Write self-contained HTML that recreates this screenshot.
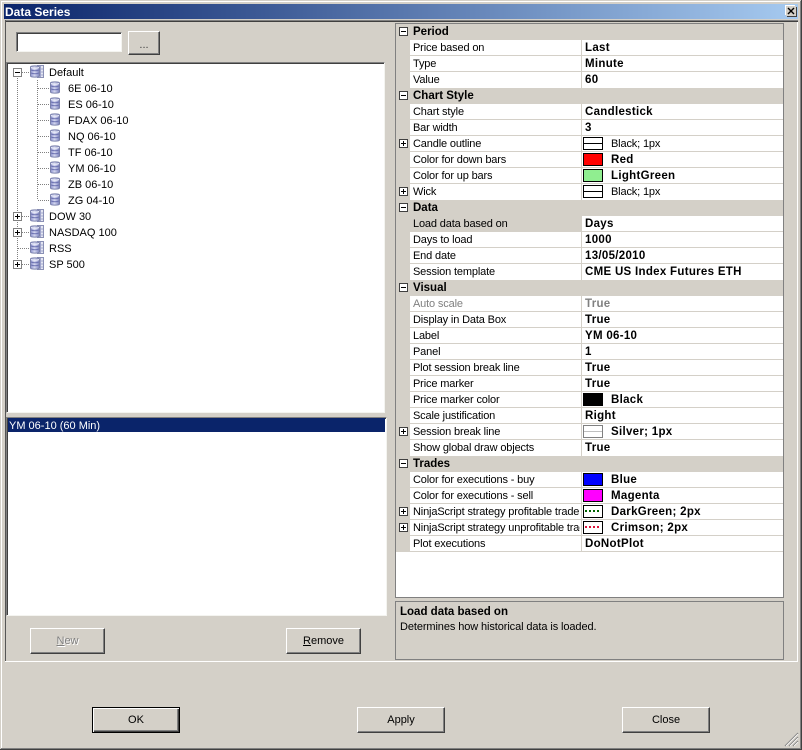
<!DOCTYPE html>
<html><head><meta charset="utf-8"><style>
html,body{margin:0;padding:0;background:#d4d0c8}
#w{position:relative;width:802px;height:750px;overflow:hidden;background:#d4d0c8;font:11px/16px "Liberation Sans",sans-serif;color:#000}
#w div,#w span.a{position:absolute;white-space:nowrap}
.btn{background:#d4d0c8;border:1px solid;border-color:#fff #404040 #404040 #fff;box-shadow:inset -1px -1px 0 #808080;text-align:center;box-sizing:border-box;line-height:25px;font-size:11px}
.sunk{background:#fff;border:1px solid;border-color:#808080 #f4f4f0 #f4f4f0 #808080;box-shadow:inset 1px 1px 0 #404040;box-sizing:border-box}
.t{font-size:11px;letter-spacing:0;margin-top:1px}
.n{left:413px;width:167px;overflow:hidden;font-size:11px;letter-spacing:-.15px;line-height:16px}
.v{left:585px;font-weight:bold;letter-spacing:.3px;font-size:11.5px;line-height:16px}
.h{left:413px;font-weight:bold;letter-spacing:0;font-size:11.5px;line-height:16px}
.ln{left:410px;width:373px;height:1px;background:#d4d0c8}
.sw{left:583px;width:20px;height:13px;border:1px solid #000;box-sizing:border-box}
.pb{left:399px;width:9px;height:9px;border:1px solid #404040;box-sizing:border-box;background:#fff}
.pb:before{content:"";position:absolute;left:1px;top:3px;width:5px;height:1px;background:#000}
.pb.p:after{content:"";position:absolute;left:3px;top:1px;width:1px;height:5px;background:#000}
.tb{left:13px;width:9px;height:9px;border:1px solid #808080;box-sizing:border-box;background:#fff}
.tb:before{content:"";position:absolute;left:1px;top:3px;width:5px;height:1px;background:#000}
.tb.p:after{content:"";position:absolute;left:3px;top:1px;width:1px;height:5px;background:#000}
.dh{height:1px;background:repeating-linear-gradient(90deg,#808080 0 1px,transparent 1px 2px)}
.dv{width:1px;background:repeating-linear-gradient(180deg,#808080 0 1px,transparent 1px 2px)}
svg{position:absolute;display:block}
</style></head><body><div id="w">
<!-- frame -->
<div style="left:0;top:0;width:802px;height:1px;background:#d4d0c8"></div>
<div style="left:1px;top:1px;width:800px;height:1px;background:#fff"></div>
<div style="left:1px;top:1px;width:1px;height:747px;background:#fff"></div>
<div style="left:801px;top:0;width:1px;height:750px;background:#404040"></div>
<div style="left:800px;top:1px;width:1px;height:748px;background:#808080"></div>
<div style="left:0;top:749px;width:802px;height:1px;background:#404040"></div>
<div style="left:1px;top:748px;width:800px;height:1px;background:#808080"></div>
<!-- title -->
<div style="left:4px;top:4px;width:794px;height:15px;background:linear-gradient(90deg,#0a246a,#a6caf0)"></div>
<div style="left:5px;top:4px;color:#fff;font-weight:bold;font-size:12px;line-height:17px">Data Series</div>
<div style="left:786px;top:6px;width:10px;height:10px;background:#d4d0c8;box-shadow:1px 1px 0 #404040,-1px -1px 0 #fff"></div>
<svg style="left:786px;top:6px" width="10" height="10"><path d="M2 2L8 8M8 2L2 8" stroke="#000" stroke-width="1.4"/></svg>
<!-- panel -->
<div style="left:5px;top:20px;width:793px;height:1px;background:#808080"></div>
<div style="left:5px;top:21px;width:793px;height:1px;background:#404040"></div>
<div style="left:5px;top:20px;width:1px;height:641px;background:#555"></div>
<div style="left:5px;top:661px;width:793px;height:1px;background:#fff"></div>
<div style="left:797px;top:22px;width:1px;height:640px;background:#fff"></div>
<!-- top input -->
<div class="sunk" style="left:16px;top:32px;width:106px;height:20px"></div>
<div class="btn" style="left:128px;top:31px;width:32px;height:24px;line-height:26px;color:#404040">...</div>
<!-- tree -->
<div class="sunk" style="left:6px;top:62px;width:379px;height:351px"></div>
<div class="dv" style="left:17px;top:76px;height:188px"></div>
<div class="dv" style="left:37px;top:80px;height:120px"></div>
<div class="dh" style="left:22px;top:72px;width:8px"></div>
<div class="dh" style="left:22px;top:216px;width:8px"></div>
<div class="dh" style="left:22px;top:232px;width:8px"></div>
<div class="dh" style="left:18px;top:248px;width:12px"></div>
<div class="dh" style="left:22px;top:264px;width:8px"></div>
<div class="dh" style="left:38px;top:88px;width:12px"></div>
<div class="dh" style="left:38px;top:104px;width:12px"></div>
<div class="dh" style="left:38px;top:120px;width:12px"></div>
<div class="dh" style="left:38px;top:136px;width:12px"></div>
<div class="dh" style="left:38px;top:152px;width:12px"></div>
<div class="dh" style="left:38px;top:168px;width:12px"></div>
<div class="dh" style="left:38px;top:184px;width:12px"></div>
<div class="dh" style="left:38px;top:200px;width:12px"></div>
<div class="tb" style="top:68px"></div>
<div class="tb p" style="top:212px"></div>
<div class="tb p" style="top:228px"></div>
<div class="tb p" style="top:260px"></div>
<svg width="0" height="0" style="left:0;top:0"><defs>
<linearGradient id="g" x1="0" x2="1" y1="0" y2="0"><stop offset="0" stop-color="#8a90cc"/><stop offset=".45" stop-color="#d6d9f0"/><stop offset="1" stop-color="#7a80bc"/></linearGradient>
<g id="c"><path d="M.5 2C.5 .5 9.5 .5 9.5 2V11C9.5 12.5 .5 12.5 .5 11Z" fill="url(#g)" stroke="#7a80aa"/><path d="M1 5C3 6 7 6 9 5M1 8C3 9 7 9 9 8" stroke="#7076b4" fill="none"/><path d="M1 2.5C3 3.5 7 3.5 9 2.5" stroke="#eef0fa" fill="none"/></g>
<g id="p"><rect x="7.5" y=".5" width="6" height="12" fill="#e4e6f2" stroke="#8a90b5"/><path d="M8 4H13M8 7H13M8 10H13M10.5 1V12" stroke="#a0a5cc"/><use href="#c" x="0" y="0"/></g>
</defs></svg>
<svg style="left:50px;top:81px" width="10" height="14"><use href="#c"/></svg>
<svg style="left:50px;top:97px" width="10" height="14"><use href="#c"/></svg>
<svg style="left:50px;top:113px" width="10" height="14"><use href="#c"/></svg>
<svg style="left:50px;top:129px" width="10" height="14"><use href="#c"/></svg>
<svg style="left:50px;top:145px" width="10" height="14"><use href="#c"/></svg>
<svg style="left:50px;top:161px" width="10" height="14"><use href="#c"/></svg>
<svg style="left:50px;top:177px" width="10" height="14"><use href="#c"/></svg>
<svg style="left:50px;top:193px" width="10" height="14"><use href="#c"/></svg>
<svg style="left:30px;top:65px" width="14" height="14"><use href="#p"/></svg>
<svg style="left:30px;top:209px" width="14" height="14"><use href="#p"/></svg>
<svg style="left:30px;top:225px" width="14" height="14"><use href="#p"/></svg>
<svg style="left:30px;top:241px" width="14" height="14"><use href="#p"/></svg>
<svg style="left:30px;top:257px" width="14" height="14"><use href="#p"/></svg>
<div class="t" style="left:49px;top:64px">Default</div>
<div class="t" style="left:68px;top:80px">6E 06-10</div>
<div class="t" style="left:68px;top:96px">ES 06-10</div>
<div class="t" style="left:68px;top:112px">FDAX 06-10</div>
<div class="t" style="left:68px;top:128px">NQ 06-10</div>
<div class="t" style="left:68px;top:144px">TF 06-10</div>
<div class="t" style="left:68px;top:160px">YM 06-10</div>
<div class="t" style="left:68px;top:176px">ZB 06-10</div>
<div class="t" style="left:68px;top:192px">ZG 04-10</div>
<div class="t" style="left:49px;top:208px">DOW 30</div>
<div class="t" style="left:49px;top:224px">NASDAQ 100</div>
<div class="t" style="left:49px;top:240px">RSS</div>
<div class="t" style="left:49px;top:256px">SP 500</div>
<!-- list -->
<div class="sunk" style="left:6px;top:417px;width:381px;height:199px"></div>
<div style="left:8px;top:418px;width:377px;height:14px;background:#0a246a;color:#fff;font-size:11px;line-height:17px;text-indent:1px">YM 06-10 (60 Min)</div>
<div class="btn" style="left:30px;top:628px;width:75px;height:26px;color:#808080;text-shadow:1px 1px 0 #fff"><u>N</u>ew</div>
<div class="btn" style="left:286px;top:628px;width:75px;height:26px"><u>R</u>emove</div>
<!-- grid -->
<div style="left:395px;top:23px;width:389px;height:575px;background:#fff;box-sizing:border-box;border:1px solid #808080;border-bottom-color:#808080"></div>
<div style="left:396px;top:24px;width:14px;height:528px;background:#d4d0c8"></div>
<div style="left:581px;top:40px;width:1px;height:512px;background:#d4d0c8"></div>
<div style="left:396px;top:24px;width:387px;height:16px;background:#d4d0c8"></div>
<div style="left:396px;top:88px;width:387px;height:16px;background:#d4d0c8"></div>
<div style="left:396px;top:200px;width:387px;height:16px;background:#d4d0c8"></div>
<div style="left:396px;top:280px;width:387px;height:16px;background:#d4d0c8"></div>
<div style="left:396px;top:456px;width:387px;height:16px;background:#d4d0c8"></div>
<div style="left:410px;top:216px;width:171px;height:16px;background:#d4d0c8"></div>
<div class="ln" style="top:55px"></div><div class="ln" style="top:71px"></div><div class="ln" style="top:119px"></div><div class="ln" style="top:135px"></div><div class="ln" style="top:151px"></div><div class="ln" style="top:167px"></div><div class="ln" style="top:183px"></div><div class="ln" style="top:247px"></div><div class="ln" style="top:263px"></div><div class="ln" style="top:311px"></div><div class="ln" style="top:327px"></div><div class="ln" style="top:343px"></div><div class="ln" style="top:359px"></div><div class="ln" style="top:375px"></div><div class="ln" style="top:391px"></div><div class="ln" style="top:407px"></div><div class="ln" style="top:423px"></div><div class="ln" style="top:439px"></div><div class="ln" style="top:487px"></div><div class="ln" style="top:503px"></div><div class="ln" style="top:519px"></div><div class="ln" style="top:535px"></div><div class="ln" style="top:231px"></div><div class="ln" style="top:551px"></div>
<div class="pb" style="top:27px"></div><div class="pb" style="top:91px"></div><div class="pb" style="top:203px"></div><div class="pb" style="top:283px"></div><div class="pb" style="top:459px"></div>
<div class="pb p" style="top:139px"></div><div class="pb p" style="top:187px"></div><div class="pb p" style="top:427px"></div><div class="pb p" style="top:507px"></div><div class="pb p" style="top:523px"></div>
<div class="h" style="top:24px">Period</div><div class="h" style="top:88px">Chart Style</div><div class="h" style="top:200px">Data</div><div class="h" style="top:280px">Visual</div><div class="h" style="top:456px">Trades</div>
<div class="n" style="top:40px">Price based on</div><div class="v" style="top:40px">Last</div>
<div class="n" style="top:56px">Type</div><div class="v" style="top:56px">Minute</div>
<div class="n" style="top:72px">Value</div><div class="v" style="top:72px">60</div>
<div class="n" style="top:104px">Chart style</div><div class="v" style="top:104px">Candlestick</div>
<div class="n" style="top:120px">Bar width</div><div class="v" style="top:120px">3</div>
<div class="n" style="top:136px">Candle outline</div><div class="sw" style="top:137px;background:linear-gradient(#fff 5px,#000 5px,#000 6px,#fff 6px)"></div><div class="n" style="left:611px;top:136px">Black; 1px</div>
<div class="n" style="top:152px">Color for down bars</div><div class="sw" style="top:153px;background:#f00"></div><div class="v" style="left:611px;top:152px">Red</div>
<div class="n" style="top:168px">Color for up bars</div><div class="sw" style="top:169px;background:#90ee90"></div><div class="v" style="left:611px;top:168px">LightGreen</div>
<div class="n" style="top:184px">Wick</div><div class="sw" style="top:185px;background:linear-gradient(#fff 5px,#000 5px,#000 6px,#fff 6px)"></div><div class="n" style="left:611px;top:184px">Black; 1px</div>
<div class="n" style="top:216px">Load data based on</div><div class="v" style="top:216px">Days</div>
<div class="n" style="top:232px">Days to load</div><div class="v" style="top:232px">1000</div>
<div class="n" style="top:248px">End date</div><div class="v" style="top:248px">13/05/2010</div>
<div class="n" style="top:264px">Session template</div><div class="v" style="top:264px">CME US Index Futures ETH</div>
<div class="n" style="top:296px;color:#808080">Auto scale</div><div class="v" style="top:296px;color:#808080">True</div>
<div class="n" style="top:312px">Display in Data Box</div><div class="v" style="top:312px">True</div>
<div class="n" style="top:328px">Label</div><div class="v" style="top:328px">YM 06-10</div>
<div class="n" style="top:344px">Panel</div><div class="v" style="top:344px">1</div>
<div class="n" style="top:360px">Plot session break line</div><div class="v" style="top:360px">True</div>
<div class="n" style="top:376px">Price marker</div><div class="v" style="top:376px">True</div>
<div class="n" style="top:392px">Price marker color</div><div class="sw" style="top:393px;background:#000"></div><div class="v" style="left:611px;top:392px">Black</div>
<div class="n" style="top:408px">Scale justification</div><div class="v" style="top:408px">Right</div>
<div class="n" style="top:424px">Session break line</div><div class="sw" style="top:425px;border-color:#808080;background:linear-gradient(#fff 5px,#c0c0c0 5px,#c0c0c0 6px,#fff 6px)"></div><div class="v" style="left:611px;top:424px">Silver; 1px</div>
<div class="n" style="top:440px">Show global draw objects</div><div class="v" style="top:440px">True</div>
<div class="n" style="top:472px">Color for executions - buy</div><div class="sw" style="top:473px;background:#00f"></div><div class="v" style="left:611px;top:472px">Blue</div>
<div class="n" style="top:488px">Color for executions - sell</div><div class="sw" style="top:489px;background:#f0f"></div><div class="v" style="left:611px;top:488px">Magenta</div>
<div class="n" style="top:504px">NinjaScript strategy profitable trade</div><div class="sw" style="top:505px;background:#fff"></div><div class="dh" style="left:585px;top:510px;width:16px;height:2px;background:repeating-linear-gradient(90deg,#006400 0 2px,transparent 2px 4px)"></div><div class="v" style="left:611px;top:504px">DarkGreen; 2px</div>
<div class="n" style="top:520px">NinjaScript strategy unprofitable trade</div><div class="sw" style="top:521px;background:#fff"></div><div class="dh" style="left:585px;top:526px;width:16px;height:2px;background:repeating-linear-gradient(90deg,#dc143c 0 2px,transparent 2px 4px)"></div><div class="v" style="left:611px;top:520px">Crimson; 2px</div>
<div class="n" style="top:536px">Plot executions</div><div class="v" style="top:536px">DoNotPlot</div>
<!-- description -->
<div style="left:395px;top:601px;width:389px;height:59px;box-sizing:border-box;border:1px solid #808080"></div>
<div style="left:400px;top:604px;font-weight:bold;font-size:11.5px;line-height:16px">Load data based on</div>
<div style="left:400px;top:619px;font-size:11px;letter-spacing:-.1px;line-height:16px">Determines how historical data is loaded.</div>
<!-- bottom buttons -->
<div class="btn" style="left:92px;top:707px;width:88px;height:26px;border:1px solid #000;box-shadow:inset 1px 1px 0 #fff,inset -1px -1px 0 #404040,inset -2px -2px 0 #808080">OK</div>
<div class="btn" style="left:357px;top:707px;width:88px;height:26px">Apply</div>
<div class="btn" style="left:622px;top:707px;width:88px;height:26px">Close</div>
<svg style="left:784px;top:732px" width="15" height="15"><path d="M1 14L14 1M5 14L14 5M9 14L14 9" stroke="#808080" stroke-width="1.2"/><path d="M2 14L14 2M6 14L14 6M10 14L14 10" stroke="#fff" stroke-width=".8"/></svg>
</div></body></html>
